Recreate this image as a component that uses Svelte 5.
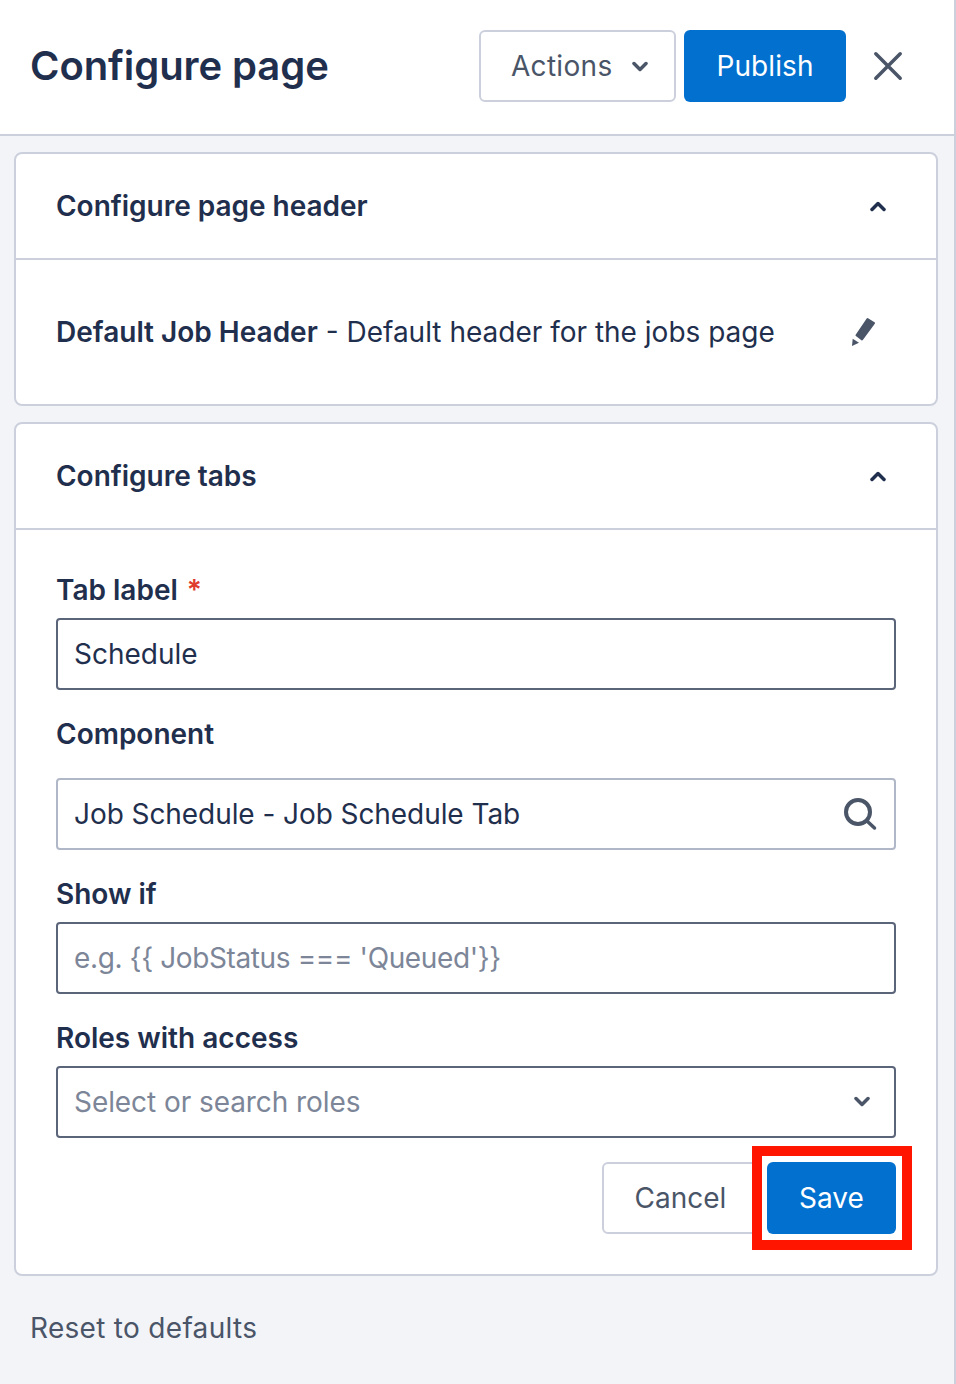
<script>
  let tabLabel = 'Schedule';
  let component = 'Job Schedule - Job Schedule Tab';
  let showIf = '';
</script>

<div class="panel">
  <header class="top">
    <h1>Configure page</h1>
    <div class="top-actions">
      <button class="btn btn-outline actions">
        Actions
        <svg width="16" height="11" viewBox="0 0 16 11"><path d="M2 2.500l6 6 6-6" fill="none" stroke="#4a5568" stroke-width="3.500" stroke-linecap="round" stroke-linejoin="round"/></svg>
      </button>
      <button class="btn btn-primary publish">Publish</button>
      <button class="close" aria-label="Close">
        <svg width="30" height="30" viewBox="0 0 30 30"><path d="M2.800 2.800l24.400 24.400M27.200 2.800L2.800 27.200" fill="none" stroke="#4a5568" stroke-width="3.500" stroke-linecap="round"/></svg>
      </button>
    </div>
  </header>

  <main class="content">
    <section class="card">
      <div class="card-head">
        <h2>Configure page header</h2>
        <svg width="16" height="11" viewBox="0 0 16 11"><path d="M2 8.500l6-6 6 6" fill="none" stroke="#1f2f4d" stroke-width="3.500" stroke-linecap="round" stroke-linejoin="round"/></svg>
      </div>
      <div class="header-row">
        <p><strong>Default Job Header</strong> - Default header for the jobs page</p>
        <svg class="pencil" width="24" height="30" viewBox="0 0 24 30">
          <path d="M15.500 3L22 7.200 10 23.500 4.500 19.300z" fill="#4a5568" stroke="#4a5568" stroke-width="2" stroke-linejoin="round"/>
          <path d="M.7 22.700l6.300 4L0 30z" fill="#4a5568"/>
        </svg>
      </div>
    </section>

    <section class="card">
      <div class="card-head">
        <h2>Configure tabs</h2>
        <svg width="16" height="11" viewBox="0 0 16 11"><path d="M2 8.500l6-6 6 6" fill="none" stroke="#1f2f4d" stroke-width="3.500" stroke-linecap="round" stroke-linejoin="round"/></svg>
      </div>
      <div class="form">
        <label class="lbl" for="tab-label">Tab label <span class="req">*</span></label>
        <input id="tab-label" class="field" bind:value={tabLabel} />

        <label class="lbl comp-lbl" for="comp">Component</label>
        <div class="field-wrap">
          <input id="comp" class="field light" bind:value={component} />
          <svg class="field-icon" width="34" height="34" viewBox="0 0 34 34">
            <circle cx="14" cy="15" r="12" fill="none" stroke="#4a5568" stroke-width="4"/>
            <path d="M23 24l7.500 7" stroke="#4a5568" stroke-width="3.500" stroke-linecap="round"/>
          </svg>
        </div>

        <label class="lbl" for="show-if">Show if</label>
        <input id="show-if" class="field tight" placeholder={"e.g. {{ JobStatus === 'Queued'}}"} bind:value={showIf} />

        <label class="lbl" for="roles">Roles with access</label>
        <div class="field-wrap">
          <input id="roles" class="field" placeholder="Select or search roles" />
          <svg class="field-icon chev" width="16" height="11" viewBox="0 0 16 11"><path d="M2 2.500l6 6 6-6" fill="none" stroke="#4a5568" stroke-width="3.500" stroke-linecap="round" stroke-linejoin="round"/></svg>
        </div>

        <div class="form-actions">
          <button class="btn btn-outline cancel">Cancel</button>
          <div class="save-wrap">
            <span class="highlight"></span>
            <button class="btn btn-primary save">Save</button>
          </div>
        </div>
      </div>
    </section>

    <div class="reset">Reset to defaults</div>
  </main>
</div>

<style>
  :global(body) {
    background: #f3f4f8;
    font-family: Inter, "Liberation Sans", sans-serif;
  }

  .panel {
    width: 956px;
    height: 1384px;
    box-sizing: border-box;
    border-right: 2px solid #ccd0dd;
    background: #f3f4f8;
    overflow: hidden;
  }

  .top {
    height: 136px;
    box-sizing: border-box;
    background: #fff;
    border-bottom: 2px solid #ccd0dd;
    padding: 30px 42px 0 30px;
    display: flex;
    justify-content: space-between;
    align-items: flex-start;
  }

  h1 {
    margin: 0;
    font-size: 40px;
    line-height: 72px;
    font-weight: 600;
    letter-spacing: -0.07px;
    color: #1f2f4d;
  }

  .top-actions {
    display: flex;
    align-items: center;
    gap: 8px;
  }

  .btn {
    height: 72px;
    box-sizing: border-box;
    border-radius: 6px;
    font-family: inherit;
    font-size: 28px;
    font-weight: 400;
    padding: 0;
  }

  .btn-outline {
    background: #fff;
    border: 2px solid #ccd0dd;
    color: #4a5568;
  }

  .btn-primary {
    background: #0270cf;
    border: none;
    color: #fff;
  }

  .actions {
    width: 197px;
    padding-left: 30px;
    display: flex;
    align-items: center;
    gap: 20px;
    letter-spacing: 0.3px;
  }

  .actions svg {
    flex-shrink: 0;
  }

  .publish {
    width: 162px;
    letter-spacing: 0.1px;
  }

  .close {
    background: none;
    border: none;
    padding: 0;
    margin-left: 10px;
    width: 48px;
    height: 48px;
    display: flex;
    align-items: center;
    justify-content: center;
  }

  .content {
    padding: 16px 16px 0 14px;
    display: flex;
    flex-direction: column;
    gap: 16px;
  }

  .card {
    background: #fff;
    border: 2px solid #ccd0dd;
    border-radius: 8px;
  }

  .card-head {
    height: 106px;
    box-sizing: border-box;
    border-bottom: 2px solid #ccd0dd;
    padding: 0 50px 0 40px;
    display: flex;
    align-items: center;
    justify-content: space-between;
  }

  h2 {
    margin: 0;
    font-size: 28px;
    font-weight: 600;
    letter-spacing: -0.02px;
    color: #1f2f4d;
  }

  .header-row {
    height: 144px;
    box-sizing: border-box;
    padding: 0 60px 0 40px;
    display: flex;
    align-items: center;
    justify-content: space-between;
  }

  .header-row p {
    margin: 0;
    font-size: 28px;
    color: #1f2f4d;
  }

  .header-row strong {
    font-weight: 600;
  }

  .pencil {
    margin-top: -2px;
  }

  .form {
    padding: 40px;
    display: flex;
    flex-direction: column;
  }

  .lbl {
    font-size: 28px;
    line-height: 40px;
    font-weight: 600;
    color: #1f2f4d;
    margin-top: 24px;
    margin-bottom: 8px;
  }

  .lbl:first-child {
    margin-top: 0;
  }

  .comp-lbl {
    margin-bottom: 24px;
  }

  .req {
    color: #e03a2f;
    margin-left: 2px;
  }

  .field {
    width: 100%;
    height: 72px;
    box-sizing: border-box;
    border: 2px solid #5a6579;
    border-radius: 4px;
    padding: 0 16px;
    font-family: inherit;
    font-size: 28px;
    color: #1f2f4d;
    background: #fff;
    display: block;
    outline: none;
  }

  .field::placeholder {
    color: #7c8698;
    opacity: 1;
  }

  #roles::placeholder {
    letter-spacing: -0.07px;
  }

  .field.light {
    border-color: #b0b8c8;
    letter-spacing: -0.07px;
  }

  .field.tight::placeholder {
    letter-spacing: -0.38px;
  }

  .field-wrap {
    position: relative;
  }

  .field-icon {
    position: absolute;
    right: 18px;
    top: 19px;
  }

  .field-icon.chev {
    right: 26px;
    top: 30px;
  }

  .form-actions {
    display: flex;
    justify-content: flex-end;
    gap: 8px;
    margin-top: 24px;
  }

  .cancel {
    width: 157px;
  }

  .save-wrap {
    position: relative;
  }

  .highlight {
    position: absolute;
    inset: -16px -16px -16px -15px;
    border: 10px solid #ff1500;
    background: #fff;
  }

  .save {
    position: relative;
    width: 129px;
    display: block;
  }

  .reset {
    font-size: 28px;
    line-height: 40px;
    letter-spacing: 0.3px;
    color: #4a5568;
    padding-left: 16px;
    margin-top: 16px;
  }
</style>
